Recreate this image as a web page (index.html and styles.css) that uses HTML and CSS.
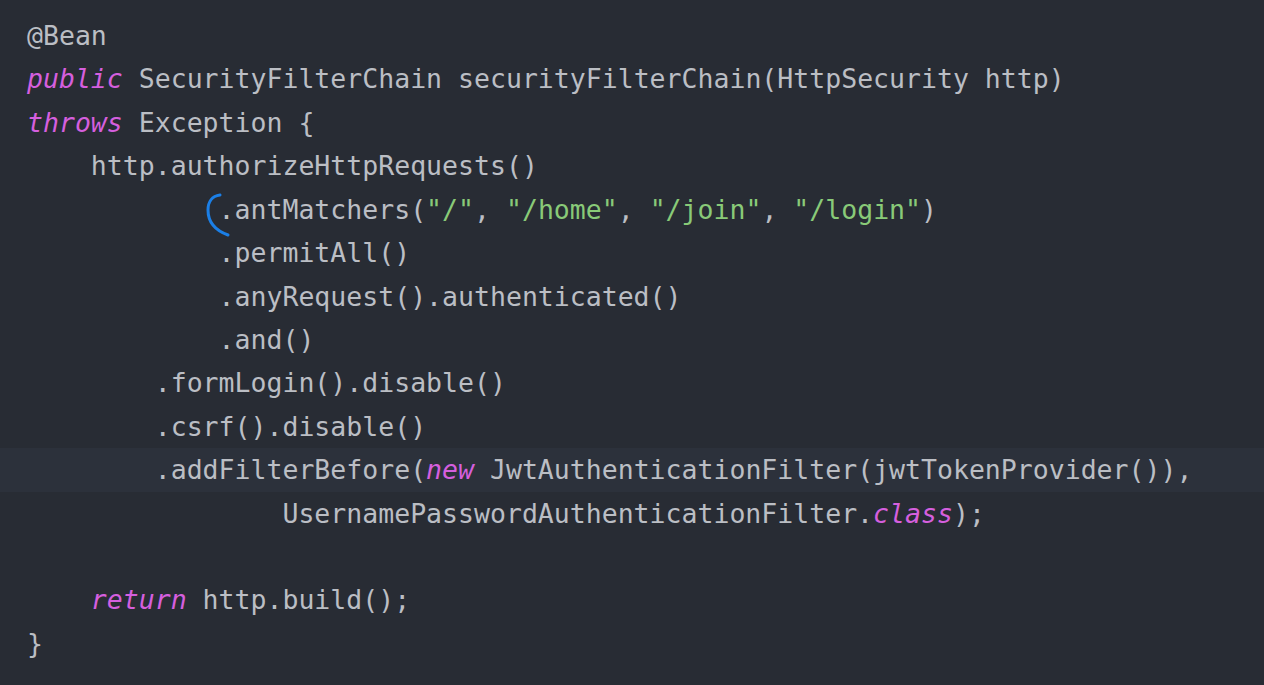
FILE: index.html
```html
<!DOCTYPE html>
<html lang="en">
<head>
<meta charset="utf-8">
<title>SecurityFilterChain</title>
<link rel="stylesheet" href="styles.css">
</head>
<body>
<div class="editor">
  <div class="line">@Bean</div>
  <div class="line"><span class="kw">public</span> SecurityFilterChain securityFilterChain(HttpSecurity http)</div>
  <div class="line"><span class="kw">throws</span> Exception {</div>
  <div class="line">    http.authorizeHttpRequests()</div>
  <div class="line">            .antMatchers(<span class="str">"/"</span>, <span class="str">"/home"</span>, <span class="str">"/join"</span>, <span class="str">"/login"</span>)</div>
  <div class="line">            .permitAll()</div>
  <div class="line">            .anyRequest().authenticated()</div>
  <div class="line">            .and()</div>
  <div class="line">        .formLogin().disable()</div>
  <div class="line">        .csrf().disable()</div>
  <div class="line current">        .addFilterBefore(<span class="kw">new</span> JwtAuthenticationFilter(jwtTokenProvider()),</div>
  <div class="line">                UsernamePasswordAuthenticationFilter.<span class="kw">class</span>);</div>
  <div class="line"> </div>
  <div class="line">    <span class="kw">return</span> http.build();</div>
  <div class="line">}</div>
  <svg class="mark" width="40" height="50" viewBox="0 0 40 50" aria-hidden="true">
    <path d="M22 2 C14 3, 10 9, 10 17 C10 30, 19 38, 30 42" fill="none" stroke="#1b7fe6" stroke-width="3" stroke-linecap="round"/>
  </svg>
</div>
</body>
</html>
```

FILE: styles.css
```css
html, body {
  margin: 0;
  padding: 0;
  background: #282c34;
}

body {
  width: 1264px;
  height: 685px;
  overflow: hidden;
}

.editor {
  position: relative;
  padding-top: 14px;
  font-family: "DejaVu Sans Mono", "Liberation Mono", monospace;
  font-size: 26.52px;
  color: #bbbec4;
}

.line {
  height: 43.43px;
  line-height: 43.43px;
  padding-left: 27px;
  white-space: pre;
}

.line.current {
  background: #2c313b;
}

.kw {
  color: #d55fde;
  font-style: italic;
}

.str {
  color: #89ca78;
}

.mark {
  position: absolute;
  left: 198px;
  top: 193px;
}
```
